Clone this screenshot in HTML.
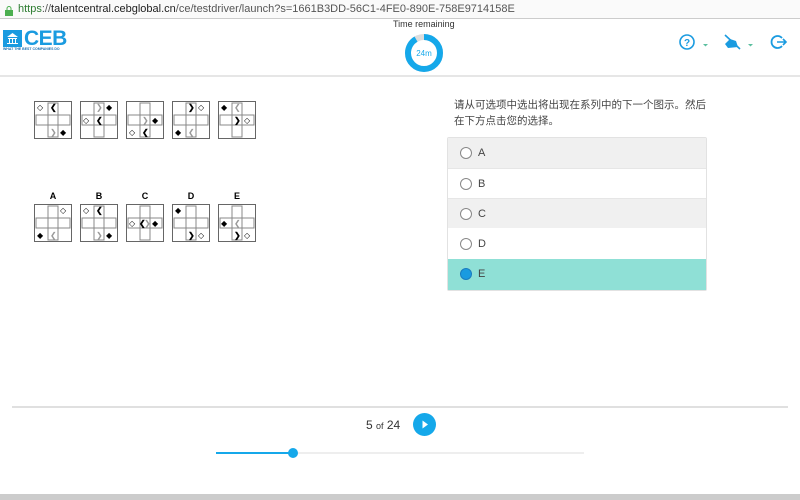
<!DOCTYPE html>
<html><head><meta charset="utf-8"><style>
*{margin:0;padding:0;box-sizing:border-box}
body{width:800px;height:500px;overflow:hidden;background:#fff;font-family:"Liberation Sans","Noto Sans CJK SC",sans-serif;position:relative;color:#333}
.abs{position:absolute}
.url{left:0;top:0;width:800px;height:19px;background:#fafafa;border-bottom:1px solid #ccc;font-size:11px;line-height:19px;padding-left:18px;color:#555}
.hdr{left:0;top:75px;width:800px;height:2px;background:#e6e6e6}
.opt{left:448px;width:258px;height:30px;font-size:11px;line-height:30px;padding-left:30px;color:#444}
.rad{position:absolute;left:12px;top:9px;width:12px;height:12px;border:1px solid #888;border-radius:50%;background:#fff}
</style></head><body>
<div class="abs url"><span style="position:absolute;left:5px;top:4px;width:8px;height:10px;"><svg width="8" height="10"><rect x="0" y="4" width="8" height="6" fill="#4caf50"/><path d="M2 4V2.5a2 2 0 0 1 4 0V4" stroke="#4caf50" fill="none"/></svg></span><span style="color:#2e7d32">https</span>://<b style="color:#222;font-weight:normal">talentcentral.cebglobal.cn</b>/ce/testdriver/launch?s=1661B3DD-56C1-4FE0-890E-758E9714158E</div>
<div class="abs" style="left:3px;top:30px;width:19px;height:17px;background:#1a9be0"><svg width="19" height="17"><path d="M4 7L9.5 3L15 7Z M5 8h9v1H5z M6 9h1v4H6z M9 9h1v4H9z M12 9h1v4h-1z M4 13h11v1H4z" fill="#fff"/></svg></div>
<div class="abs" style="left:24px;top:27px;font-size:21px;font-weight:bold;color:#1a9be0;letter-spacing:-0.5px">CEB</div>
<div class="abs" style="left:3px;top:47px;font-size:3.5px;color:#1a6fb0;font-weight:bold">WHAT THE BEST COMPANIES DO</div>
<div class="abs" style="left:393px;top:19px;font-size:9px;color:#333">Time remaining</div>
<svg class="abs" style="left:404px;top:33px" width="40" height="40"><circle cx="20" cy="20" r="16" fill="none" stroke="#ddd" stroke-width="6"/><circle cx="20" cy="20" r="16" fill="none" stroke="#15a8ea" stroke-width="6" stroke-dasharray="92 100" transform="rotate(-90 20 20)"/><text x="20" y="23" font-size="8" fill="#15a8ea" text-anchor="middle" font-family="Liberation Sans">24m</text></svg>
<svg class="abs" style="left:678px;top:32px" width="115" height="22">
<circle cx="9" cy="10" r="7" fill="none" stroke="#1a9be0" stroke-width="1.6"/><text x="9" y="14" font-size="10" fill="#1a9be0" text-anchor="middle" font-family="Liberation Sans" font-weight="bold">?</text>
<path d="M25 12h5l-2.5 2.5z" fill="#5bbf9f"/>
<path d="M47 12 L52 7 L58 9 L60 15 L50 16Z" fill="#1a9be0"/><path d="M47 3 L62 17" stroke="#1a9be0" stroke-width="1.6"/>
<path d="M70 12h5l-2.5 2.5z" fill="#5bbf9f"/>
<path d="M104 6 A6 6 0 1 0 104 14" fill="none" stroke="#1a9be0" stroke-width="1.8"/><path d="M99 10h8M105 7l3 3-3 3" stroke="#1a9be0" stroke-width="1.6" fill="none"/>
</svg>
<div class="abs hdr"></div>

<svg class="abs" style="left:30px;top:95px" width="240" height="150" font-family="Liberation Sans" font-size="8">
<defs><g id="b"><rect x="0.5" y="0.5" width="37" height="37" fill="#fff" stroke="#666"/><rect x="14" y="2" width="10" height="34" fill="none" stroke="#888"/><rect x="2" y="14" width="34" height="10" fill="none" stroke="#888"/></g></defs>
<g transform="translate(4,6)"><use href="#b"/><text x="3" y="9">◇</text><text x="16" y="9" font-weight="bold">❮</text><text x="16" y="34" fill="#999">❯</text><text x="26" y="34">◆</text></g>
<g transform="translate(50,6)"><use href="#b"/><text x="16" y="9" fill="#999">❯</text><text x="26" y="9">◆</text><text x="3" y="22">◇</text><text x="16" y="22" font-weight="bold">❮</text></g>
<g transform="translate(96,6)"><use href="#b"/><text x="16" y="22" fill="#999">❯</text><text x="26" y="22">◆</text><text x="3" y="34">◇</text><text x="16" y="34" font-weight="bold">❮</text></g>
<g transform="translate(142,6)"><use href="#b"/><text x="16" y="9" font-weight="bold">❯</text><text x="26" y="9">◇</text><text x="3" y="34">◆</text><text x="16" y="34" fill="#999">❮</text></g>
<g transform="translate(188,6)"><use href="#b"/><text x="3" y="9">◆</text><text x="16" y="9" fill="#999">❮</text><text x="16" y="22" font-weight="bold">❯</text><text x="26" y="22">◇</text></g>
<g font-weight="bold" font-size="9" text-anchor="middle"><text x="23" y="104">A</text><text x="69" y="104">B</text><text x="115" y="104">C</text><text x="161" y="104">D</text><text x="207" y="104">E</text></g>
<g transform="translate(4,109)"><use href="#b"/><text x="26" y="9">◇</text><text x="3" y="34">◆</text><text x="16" y="34" fill="#999">❮</text></g>
<g transform="translate(50,109)"><use href="#b"/><text x="3" y="9">◇</text><text x="16" y="9" font-weight="bold">❮</text><text x="16" y="34" fill="#999">❯</text><text x="26" y="34">◆</text></g>
<g transform="translate(96,109)"><use href="#b"/><text x="3" y="22">◇</text><text x="13" y="22" font-weight="bold">❮</text><text x="18" y="22" fill="#999">❯</text><text x="26" y="22">◆</text></g>
<g transform="translate(142,109)"><use href="#b"/><text x="3" y="9">◆</text><text x="16" y="34" font-weight="bold">❯</text><text x="26" y="34">◇</text></g>
<g transform="translate(188,109)"><use href="#b"/><text x="3" y="22">◆</text><text x="16" y="22" fill="#999">❮</text><text x="16" y="34" font-weight="bold">❯</text><text x="26" y="34">◇</text></g>
</svg>

<div class="abs" style="left:454px;top:97px;font-size:10.5px;line-height:16px;color:#444;width:260px">请从可选项中选出将出现在系列中的下一个图示。然后<br>在下方点击您的选择。</div>
<div class="abs" style="left:447px;top:137px;width:260px;height:154px;border:1px solid #e2e2e2;border-radius:2px"></div>
<div class="abs opt" style="top:138px;background:#f0f0f0"><span class="rad"></span>A</div>
<div class="abs opt" style="top:168px;background:#fff;border-top:1px solid #e6e6e6"><span class="rad"></span>B</div>
<div class="abs opt" style="top:198px;background:#f0f0f0;border-top:1px solid #e6e6e6"><span class="rad"></span>C</div>
<div class="abs opt" style="top:229px;background:#fff"><span class="rad"></span>D</div>
<div class="abs opt" style="top:259px;height:31px;background:#8fe0d6"><span class="rad" style="background:#1a9be0;border-color:#1a7cc0;border-radius:50%"></span>E</div>

<div class="abs" style="left:12px;top:406px;width:776px;height:2px;background:#e0e0e0"></div>
<div class="abs" style="left:366px;top:418px;font-size:12px;color:#333">5 <span style="font-size:9px">of</span> 24</div>
<div class="abs" style="left:413px;top:413px;width:23px;height:23px;border-radius:50%;background:#15a8ea"><svg width="23" height="23"><path d="M9.5 7.5L15 11.5L9.5 15.5Z" fill="#fff"/></svg></div>
<div class="abs" style="left:216px;top:452px;width:368px;height:2px;background:#eee"></div>
<div class="abs" style="left:216px;top:452px;width:78px;height:2px;background:#15a8ea"></div>
<div class="abs" style="left:288px;top:448px;width:10px;height:10px;border-radius:50%;background:#15a8ea"></div>
<div class="abs" style="left:0;top:494px;width:800px;height:6px;background:#ccc"></div>
</body></html>
